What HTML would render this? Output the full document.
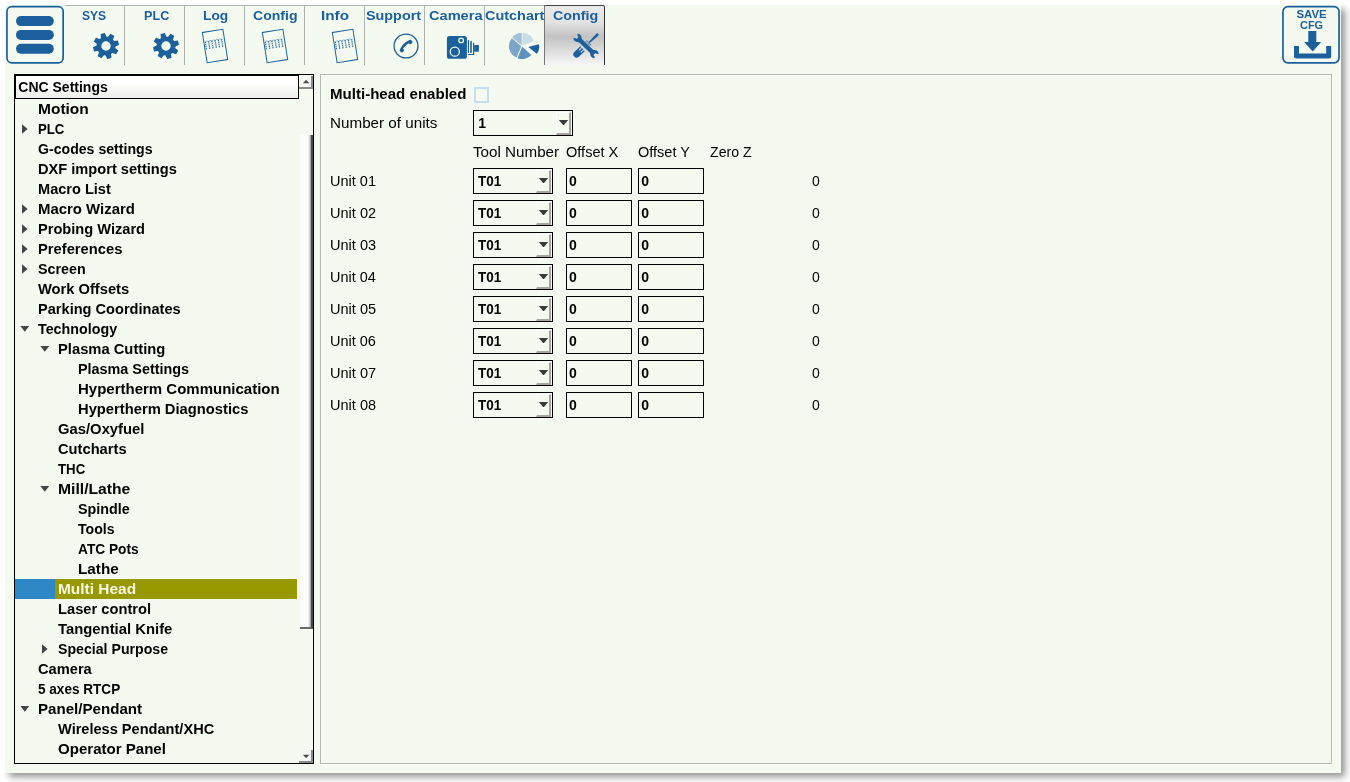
<!DOCTYPE html>
<html><head><meta charset="utf-8"><title>CNC Settings</title>
<style>
html,body{margin:0;padding:0;background:#fff;}
body{width:1350px;height:782px;position:relative;overflow:hidden;font-family:"Liberation Sans",sans-serif;color:#000000}
#win{position:absolute;left:5px;top:5px;width:1336px;height:768px;background:#f4faef;box-shadow:4px 4px 7px rgba(0,0,0,.42);}
.abs{position:absolute}
#txt{position:absolute;left:0;top:0;width:1350px;height:782px;will-change:transform}
.tx{position:absolute;white-space:nowrap;line-height:20px;transform-origin:0 0}
#menu{position:absolute;left:6px;top:5.700px;width:54.600px;height:54.600px;border:1.700px solid #1b609c;border-radius:5.500px}
#menu i{position:absolute;left:8.500px;width:38px;height:10px;border-radius:5px;background:#1b609c}
#tabline{position:absolute;left:65px;top:5px;width:480px;height:1px;background:#b0b0b0}
.tabsep{position:absolute;top:6px;width:1px;height:59px;background:#b0b2ae}
  .tabact{position:absolute;left:544px;top:5px;width:59px;height:59px;border-top-right-radius:2px;background:linear-gradient(#ebebeb 0%,#e2e2e2 28%,#c2c2c2 52%,#dcdcdc 75%,#f6f6f6 100%);border-left:1px solid #777;border-right:1px solid #333;border-top:1px solid #444}
#save{position:absolute;left:1282px;top:5.700px;width:54.400px;height:54.400px;border:1.800px solid #1b609c;border-radius:5.500px}
#tree{position:absolute;left:14px;top:74px;width:298px;height:688px;border:1px solid #000}
#hdr{position:absolute;left:15px;top:75px;width:282px;height:22px;border:1px solid #000;background:linear-gradient(#fff 0%,#fff 35%,#eceee9 100%)}
.selb{position:absolute;left:15px;top:579px;width:40px;height:20px;background:#2f88c6}
.selo{position:absolute;left:55px;top:579px;width:242px;height:20px;background:#989800}
.sbb{position:absolute;left:299px;width:12px;height:11px;border-right:2px solid #8a8a8a;border-bottom:2px solid #8a8a8a;background:#f6faf3}
#thumb{position:absolute;left:300px;top:135px;width:11px;height:492px;border-right:2px solid #484848;border-bottom:2px solid #6a6a6a;background:linear-gradient(90deg,#fbfdfa 0,#fbfdfa 8px,#c8c8c8 10px,#888 11px)}
#panel{position:absolute;left:320px;top:74px;width:1010px;height:688px;border:1px solid #b4bab2;box-shadow:inset 1px 1px 0 #f9fcf6, 1px 1px 0 #fbfdf9}
.combo{position:absolute;height:24px;border:1px solid #000}
.combo .cb{position:absolute;right:1px;top:1px;width:12px;height:20px;border-left:1px solid #fff;border-top:1px solid #fff;border-right:2px solid #a8a39e;border-bottom:2px solid #a8a39e}
.combo i{position:absolute;right:3.800px;top:9px;width:9.400px;height:5.400px;background:#3a3a3a;clip-path:polygon(0 0,100% 0,50% 100%)}
.inp{position:absolute;width:64px;height:24px;border:1px solid #000}
#cbx{position:absolute;left:474px;top:87px;width:11px;height:12px;border:2px solid #c6dcef}
</style></head><body>
<div id="win"></div>
<div class="abs" style="left:0;top:0;width:1342px;height:5px;background:#fff"></div><div class="abs" style="left:0;top:0;width:5px;height:774px;background:#fff"></div>
<svg class="abs" style="left:4px;top:4px" width="64" height="64" viewBox="4 4 64 64"><rect x="6.950" y="6.600" width="56.200" height="56.200" rx="4.800" fill="none" stroke="#1b609c" stroke-width="1.700"/><g fill="#1b609c"><rect x="16" y="16.100" width="37.800" height="10" rx="5"/><rect x="16" y="29.900" width="37.800" height="10" rx="5"/><rect x="16" y="43.700" width="37.800" height="10" rx="5"/></g></svg>
<div id="tabline"></div>
<div class="tabsep" style="left:124px"></div>
<svg class="abs" style="left:92.3px;top:32.45px" width="28" height="28" viewBox="-14 -14 28 28"><g fill="#1b609c"><path d="M-2.900 -8 L-2.250 -12.600 Q-2.200 -12.900 -1.900 -12.900 L1.900 -12.900 Q2.200 -12.900 2.250 -12.600 L2.900 -8Z" transform="rotate(-15)"/><path d="M-2.900 -8 L-2.250 -12.600 Q-2.200 -12.900 -1.900 -12.900 L1.900 -12.900 Q2.200 -12.900 2.250 -12.600 L2.900 -8Z" transform="rotate(30)"/><path d="M-2.900 -8 L-2.250 -12.600 Q-2.200 -12.900 -1.900 -12.900 L1.900 -12.900 Q2.200 -12.900 2.250 -12.600 L2.900 -8Z" transform="rotate(75)"/><path d="M-2.900 -8 L-2.250 -12.600 Q-2.200 -12.900 -1.900 -12.900 L1.900 -12.900 Q2.200 -12.900 2.250 -12.600 L2.900 -8Z" transform="rotate(120)"/><path d="M-2.900 -8 L-2.250 -12.600 Q-2.200 -12.900 -1.900 -12.900 L1.900 -12.900 Q2.200 -12.900 2.250 -12.600 L2.900 -8Z" transform="rotate(165)"/><path d="M-2.900 -8 L-2.250 -12.600 Q-2.200 -12.900 -1.900 -12.900 L1.900 -12.900 Q2.200 -12.900 2.250 -12.600 L2.900 -8Z" transform="rotate(210)"/><path d="M-2.900 -8 L-2.250 -12.600 Q-2.200 -12.900 -1.900 -12.900 L1.900 -12.900 Q2.200 -12.900 2.250 -12.600 L2.900 -8Z" transform="rotate(255)"/><path d="M-2.900 -8 L-2.250 -12.600 Q-2.200 -12.900 -1.900 -12.900 L1.900 -12.900 Q2.200 -12.900 2.250 -12.600 L2.900 -8Z" transform="rotate(300)"/><path fill-rule="evenodd" d="M0 -9.600A9.600 9.600 0 1 0 0 9.600A9.600 9.600 0 1 0 0 -9.600ZM0 -4.700A4.700 4.700 0 1 1 0 4.700A4.700 4.700 0 1 1 0 -4.700Z"/></g></svg>
<div class="tabsep" style="left:184px"></div>
<svg class="abs" style="left:152.3px;top:32.45px" width="28" height="28" viewBox="-14 -14 28 28"><g fill="#1b609c"><path d="M-2.900 -8 L-2.250 -12.600 Q-2.200 -12.900 -1.900 -12.900 L1.900 -12.900 Q2.200 -12.900 2.250 -12.600 L2.900 -8Z" transform="rotate(-15)"/><path d="M-2.900 -8 L-2.250 -12.600 Q-2.200 -12.900 -1.900 -12.900 L1.900 -12.900 Q2.200 -12.900 2.250 -12.600 L2.900 -8Z" transform="rotate(30)"/><path d="M-2.900 -8 L-2.250 -12.600 Q-2.200 -12.900 -1.900 -12.900 L1.900 -12.900 Q2.200 -12.900 2.250 -12.600 L2.900 -8Z" transform="rotate(75)"/><path d="M-2.900 -8 L-2.250 -12.600 Q-2.200 -12.900 -1.900 -12.900 L1.900 -12.900 Q2.200 -12.900 2.250 -12.600 L2.900 -8Z" transform="rotate(120)"/><path d="M-2.900 -8 L-2.250 -12.600 Q-2.200 -12.900 -1.900 -12.900 L1.900 -12.900 Q2.200 -12.900 2.250 -12.600 L2.900 -8Z" transform="rotate(165)"/><path d="M-2.900 -8 L-2.250 -12.600 Q-2.200 -12.900 -1.900 -12.900 L1.900 -12.900 Q2.200 -12.900 2.250 -12.600 L2.900 -8Z" transform="rotate(210)"/><path d="M-2.900 -8 L-2.250 -12.600 Q-2.200 -12.900 -1.900 -12.900 L1.900 -12.900 Q2.200 -12.900 2.250 -12.600 L2.900 -8Z" transform="rotate(255)"/><path d="M-2.900 -8 L-2.250 -12.600 Q-2.200 -12.900 -1.900 -12.900 L1.900 -12.900 Q2.200 -12.900 2.250 -12.600 L2.900 -8Z" transform="rotate(300)"/><path fill-rule="evenodd" d="M0 -9.600A9.600 9.600 0 1 0 0 9.600A9.600 9.600 0 1 0 0 -9.600ZM0 -4.700A4.700 4.700 0 1 1 0 4.700A4.700 4.700 0 1 1 0 -4.700Z"/></g></svg>
<div class="tabsep" style="left:244px"></div>
<svg class="abs" style="left:197px;top:25.9px" width="36" height="40" viewBox="-18 -20 36 40"><g transform="rotate(-9)" fill="none" stroke="#1b609c"><rect x="-10.400" y="-15.300" width="20.800" height="30.600" stroke-width="1"/><path d="M-8.9 -5.700v8M-5.6 -5.700v8M-2.3 -5.700v8M1.0 -5.700v8M4.3 -5.700v8M7.6 -5.700v8" stroke-width="1.300" stroke-dasharray="1.400 0.700" opacity="0.850"/><path d="M-8.9 -5.500q1.650 -1.500 3.300 0M-5.6 -5.500q1.650 -1.500 3.300 0M-2.3 -5.500q1.650 -1.500 3.300 0M1.0 -5.500q1.650 -1.500 3.300 0M4.3 -5.500q1.650 -1.500 3.300 0" stroke-width="0.700" opacity="0.600"/></g></svg>
<div class="tabsep" style="left:304px"></div>
<svg class="abs" style="left:257px;top:25.9px" width="36" height="40" viewBox="-18 -20 36 40"><g transform="rotate(-9)" fill="none" stroke="#1b609c"><rect x="-10.400" y="-15.300" width="20.800" height="30.600" stroke-width="1"/><path d="M-8.9 -5.700v8M-5.6 -5.700v8M-2.3 -5.700v8M1.0 -5.700v8M4.3 -5.700v8M7.6 -5.700v8" stroke-width="1.300" stroke-dasharray="1.400 0.700" opacity="0.850"/><path d="M-8.9 -5.500q1.650 -1.500 3.300 0M-5.6 -5.500q1.650 -1.500 3.300 0M-2.3 -5.500q1.650 -1.500 3.300 0M1.0 -5.500q1.650 -1.500 3.300 0M4.3 -5.500q1.650 -1.500 3.300 0" stroke-width="0.700" opacity="0.600"/></g></svg>
<div class="tabsep" style="left:364px"></div>
<svg class="abs" style="left:327.4px;top:25.9px" width="36" height="40" viewBox="-18 -20 36 40"><g transform="rotate(-9)" fill="none" stroke="#1b609c"><rect x="-10.400" y="-15.300" width="20.800" height="30.600" stroke-width="1"/><path d="M-8.9 -5.700v8M-5.6 -5.700v8M-2.3 -5.700v8M1.0 -5.700v8M4.3 -5.700v8M7.6 -5.700v8" stroke-width="1.300" stroke-dasharray="1.400 0.700" opacity="0.850"/><path d="M-8.9 -5.500q1.650 -1.500 3.300 0M-5.6 -5.500q1.650 -1.500 3.300 0M-2.3 -5.500q1.650 -1.500 3.300 0M1.0 -5.500q1.650 -1.500 3.300 0M4.3 -5.500q1.650 -1.500 3.300 0" stroke-width="0.700" opacity="0.600"/></g></svg>
<div class="tabsep" style="left:424px"></div>
<svg class="abs" style="left:392.3px;top:32.05px" width="28" height="28" viewBox="-14 -14 28 28"><circle r="11.950" fill="none" stroke="#1b609c" stroke-width="1.300"/><g fill="#1b609c"><rect x="-1.850" y="-1.850" width="3.700" height="3.700" rx="0.900" transform="translate(-4.100 4.300) rotate(45)"/><rect x="-1.850" y="-1.850" width="3.700" height="3.700" rx="0.900" transform="translate(4.300 -4) rotate(45)"/></g><path d="M-4.800 3.700Q-2.300 -2.100 3.700 -4.700" fill="none" stroke="#1b609c" stroke-width="2.500" stroke-linecap="round"/></svg>
<div class="tabsep" style="left:484px"></div>
<svg class="abs" style="left:445px;top:34px" width="38" height="28" viewBox="0 0 38 28"><rect x="1.900" y="2.100" width="20" height="22.700" rx="2.600" fill="#1b609c"/><circle cx="9.800" cy="17.650" r="4.550" fill="none" stroke="#f4faef" stroke-width="1.300"/><circle cx="16.100" cy="6.400" r="2.300" fill="none" stroke="#f4faef" stroke-width="1.300"/><rect x="22.800" y="6.100" width="1.200" height="12.800" fill="#1b609c"/><rect x="25" y="7.100" width="2" height="11.800" fill="#1b609c" opacity="0.800"/><path d="M28.600 8.800V20.500H22.800" fill="none" stroke="#1b609c" stroke-width="1.200"/><rect x="29.200" y="11" width="4.700" height="6.700" fill="#1b609c"/></svg>
<div class="tabsep" style="left:544px"></div>
<svg class="abs" style="left:506.04999999999995px;top:29.6px" width="36" height="32" viewBox="-16 -16 36 32"><path d="M-0.32 -0.68L-9.74 -8.59A12.3 12.3 0 0 1 -0.32 -12.98Z" fill="#a1c0d5"/><path d="M0.42 -0.62L0.42 -12.92A12.3 12.3 0 0 1 11.91 -5.03Z" fill="#c9dde6"/><path d="M0.17 0.73L9.38 8.88A12.3 12.3 0 0 1 -4.44 12.13Z" fill="#5c92bc"/><path d="M-0.73 0.18L-5.34 11.59A12.3 12.3 0 0 1 -10.15 -7.72Z" fill="#7ba6c5"/><path d="M6.30 0.90L16.88 -1.74A10.9 10.9 0 0 1 14.77 7.76Z" fill="#1b609c"/></svg>
<div class="tabact" style="left:544px"></div>
<svg class="abs" style="left:568.04px;top:28.35px" width="36" height="36" viewBox="-18 -18 36 36"><g transform="translate(-9.39 8.35) rotate(-43.500)" fill="#1b609c"><path d="M0 -3.300H8.300L7.900 -1.900H4.400V-0.800H8.300V0.800H4.400V1.900H7.900L8.300 3.300H0A3.300 3.300 0 0 1 0 -3.300Z"/><path d="M15.700 -3.300V3.300M17 -3.300V3.300" stroke="#1b609c" stroke-width="0.800" opacity="0.850" fill="none"/><path d="M17.300 -0.700L28.500 -1.400A1.400 1.400 0 0 1 28.500 1.400L17.300 0.700Z"/></g><g transform="rotate(43.600)" fill="#1b609c"><path d="M0.200 -2.150L-7 -2.150C-8.600 -2.150 -9.600 -4.200 -11.600 -4.200C-13 -4.200 -14 -3.700 -14.500 -2.800L-13.300 -1.600L-11.700 -1.600Q-11.200 0 -11.700 1.600L-13.300 1.600L-14.500 2.800C-14 3.700 -13 4.200 -11.600 4.200C-9.600 4.200 -8.600 2.150 -7 2.150L0.200 2.150Z"/><path d="M0.200 -2.150L-7 -2.150C-8.600 -2.150 -9.600 -4.200 -11.600 -4.200C-13 -4.200 -14 -3.700 -14.500 -2.800L-13.300 -1.600L-11.700 -1.600Q-11.200 0 -11.700 1.600L-13.300 1.600L-14.500 2.800C-14 3.700 -13 4.200 -11.600 4.200C-9.600 4.200 -8.600 2.150 -7 2.150L0.200 2.150Z" transform="rotate(180)"/></g></svg>
<svg class="abs" style="left:1280px;top:4px" width="62" height="62" viewBox="1280 4 62 62"><rect x="1282.950" y="6.700" width="56.100" height="56.100" rx="5" fill="none" stroke="#1b609c" stroke-width="1.700"/></svg>
<svg class="abs" style="left:1290px;top:28px" width="46" height="34" viewBox="0 0 46 34"><path d="M18.300 3.100h8v11h4.900L22.700 23.400 14.200 14.100h4.100z" fill="#1b609c"/><path d="M6.500 18v9.900h32.200V18" fill="none" stroke="#1b609c" stroke-width="5" stroke-linejoin="round"/></svg>
<div id="tree"></div>
<div id="hdr"></div>
<div class="selb"></div><div class="selo"></div>
<div class="sbb" style="top:76px"></div>
<svg class="abs" style="left:301px;top:78px" width="10" height="6" viewBox="0 0 10 6"><path d="M1.900 5.200L5.100 1.800 8.300 5.200z" fill="#4a4a4a"/></svg>
<div id="thumb"></div>
<div class="sbb" style="top:750px;height:11px"></div>
<svg class="abs" style="left:301px;top:754px" width="10" height="6" viewBox="0 0 10 6"><path d="M1.900 0.800L8.300 0.800 5.100 4.200z" fill="#4a4a4a"/></svg>
<div id="panel"></div>
<div id="cbx"></div>
<div class="combo" style="left:473px;top:110px;width:98px"><span class="cb"></span><i></i></div>
<div class="combo" style="left:473px;top:168px;width:78px"><span class="cb"></span><i></i></div>
<div class="inp" style="left:566px;top:168px"></div><div class="inp" style="left:638px;top:168px"></div>
<div class="combo" style="left:473px;top:200px;width:78px"><span class="cb"></span><i></i></div>
<div class="inp" style="left:566px;top:200px"></div><div class="inp" style="left:638px;top:200px"></div>
<div class="combo" style="left:473px;top:232px;width:78px"><span class="cb"></span><i></i></div>
<div class="inp" style="left:566px;top:232px"></div><div class="inp" style="left:638px;top:232px"></div>
<div class="combo" style="left:473px;top:264px;width:78px"><span class="cb"></span><i></i></div>
<div class="inp" style="left:566px;top:264px"></div><div class="inp" style="left:638px;top:264px"></div>
<div class="combo" style="left:473px;top:296px;width:78px"><span class="cb"></span><i></i></div>
<div class="inp" style="left:566px;top:296px"></div><div class="inp" style="left:638px;top:296px"></div>
<div class="combo" style="left:473px;top:328px;width:78px"><span class="cb"></span><i></i></div>
<div class="inp" style="left:566px;top:328px"></div><div class="inp" style="left:638px;top:328px"></div>
<div class="combo" style="left:473px;top:360px;width:78px"><span class="cb"></span><i></i></div>
<div class="inp" style="left:566px;top:360px"></div><div class="inp" style="left:638px;top:360px"></div>
<div class="combo" style="left:473px;top:392px;width:78px"><span class="cb"></span><i></i></div>
<div class="inp" style="left:566px;top:392px"></div><div class="inp" style="left:638px;top:392px"></div>
<svg class="abs" style="left:21px;top:123px" width="8" height="12" viewBox="0 0 8 12"><path d="M1 1.2 L6.600 6 L1 10.800 Z" fill="#454545"/></svg>
<svg class="abs" style="left:21px;top:203px" width="8" height="12" viewBox="0 0 8 12"><path d="M1 1.2 L6.600 6 L1 10.800 Z" fill="#454545"/></svg>
<svg class="abs" style="left:21px;top:223px" width="8" height="12" viewBox="0 0 8 12"><path d="M1 1.2 L6.600 6 L1 10.800 Z" fill="#454545"/></svg>
<svg class="abs" style="left:21px;top:243px" width="8" height="12" viewBox="0 0 8 12"><path d="M1 1.2 L6.600 6 L1 10.800 Z" fill="#454545"/></svg>
<svg class="abs" style="left:21px;top:263px" width="8" height="12" viewBox="0 0 8 12"><path d="M1 1.2 L6.600 6 L1 10.800 Z" fill="#454545"/></svg>
<svg class="abs" style="left:19px;top:325px" width="12" height="8" viewBox="0 0 12 8"><path d="M1.400 1 L10.200 1 L5.800 6.700 Z" fill="#454545"/></svg>
<svg class="abs" style="left:39px;top:345px" width="12" height="8" viewBox="0 0 12 8"><path d="M1.400 1 L10.200 1 L5.800 6.700 Z" fill="#454545"/></svg>
<svg class="abs" style="left:39px;top:485px" width="12" height="8" viewBox="0 0 12 8"><path d="M1.400 1 L10.200 1 L5.800 6.700 Z" fill="#454545"/></svg>
<svg class="abs" style="left:41px;top:643px" width="8" height="12" viewBox="0 0 8 12"><path d="M1 1.2 L6.600 6 L1 10.800 Z" fill="#454545"/></svg>
<svg class="abs" style="left:19px;top:705px" width="12" height="8" viewBox="0 0 12 8"><path d="M1.400 1 L10.200 1 L5.800 6.700 Z" fill="#454545"/></svg>
<div id="txt">
<span class="tx" style="left:82.06px;top:5.9px;font-size:13.2px;transform:scaleX(0.916);font-weight:bold;color:#1b609c;">SYS</span>
<span class="tx" style="left:143.94px;top:5.9px;font-size:13.2px;transform:scaleX(0.958);font-weight:bold;color:#1b609c;">PLC</span>
<span class="tx" style="left:202.55px;top:5.9px;font-size:13.2px;transform:scaleX(1.045);font-weight:bold;color:#1b609c;">Log</span>
<span class="tx" style="left:253.37px;top:5.9px;font-size:13.2px;transform:scaleX(1.065);font-weight:bold;color:#1b609c;">Config</span>
<span class="tx" style="left:321.24px;top:5.9px;font-size:13.2px;transform:scaleX(1.159);font-weight:bold;color:#1b609c;">Info</span>
<span class="tx" style="left:366.11px;top:5.9px;font-size:13.2px;transform:scaleX(1.089);font-weight:bold;color:#1b609c;">Support</span>
<span class="tx" style="left:428.55px;top:5.9px;font-size:13.2px;transform:scaleX(1.106);font-weight:bold;color:#1b609c;">Camera</span>
<span class="tx" style="left:484.85px;top:5.9px;font-size:13.2px;transform:scaleX(1.095);font-weight:bold;color:#1b609c;">Cutchart</span>
<span class="tx" style="left:552.56px;top:5.9px;font-size:13.2px;transform:scaleX(1.084);font-weight:bold;color:#1b609c;">Config</span>
<span class="tx" style="left:1296.50px;top:4.3px;font-size:11.4px;font-weight:bold;color:#1b609c;">SAVE</span>
<span class="tx" style="left:1300.32px;top:15.1px;font-size:11.4px;transform:scaleX(0.958);font-weight:bold;color:#1b609c;">CFG</span>
<span class="tx" style="left:18.30px;top:77.2px;font-size:14.0px;font-weight:bold;">CNC Settings</span>
<span class="tx" style="left:38.19px;top:99.3px;font-size:14.0px;transform:scaleX(1.107);font-weight:bold;">Motion</span>
<span class="tx" style="left:37.86px;top:119.3px;font-size:14.0px;transform:scaleX(0.943);font-weight:bold;">PLC</span>
<span class="tx" style="left:38.30px;top:139.3px;font-size:14.0px;transform:scaleX(1.008);font-weight:bold;">G-codes settings</span>
<span class="tx" style="left:37.76px;top:159.3px;font-size:14.0px;transform:scaleX(1.044);font-weight:bold;">DXF import settings</span>
<span class="tx" style="left:38.26px;top:179.3px;font-size:14.0px;transform:scaleX(1.040);font-weight:bold;">Macro List</span>
<span class="tx" style="left:38.23px;top:199.3px;font-size:14.0px;transform:scaleX(1.066);font-weight:bold;">Macro Wizard</span>
<span class="tx" style="left:37.76px;top:219.3px;font-size:14.0px;transform:scaleX(1.044);font-weight:bold;">Probing Wizard</span>
<span class="tx" style="left:37.75px;top:239.3px;font-size:14.0px;transform:scaleX(1.052);font-weight:bold;">Preferences</span>
<span class="tx" style="left:38.29px;top:259.3px;font-size:14.0px;transform:scaleX(1.020);font-weight:bold;">Screen</span>
<span class="tx" style="left:38.20px;top:279.3px;font-size:14.0px;transform:scaleX(1.049);font-weight:bold;">Work Offsets</span>
<span class="tx" style="left:37.76px;top:299.3px;font-size:14.0px;transform:scaleX(1.042);font-weight:bold;">Parking Coordinates</span>
<span class="tx" style="left:37.95px;top:319.3px;font-size:14.0px;transform:scaleX(1.020);font-weight:bold;">Technology</span>
<span class="tx" style="left:57.75px;top:339.3px;font-size:14.0px;transform:scaleX(1.053);font-weight:bold;">Plasma Cutting</span>
<span class="tx" style="left:77.77px;top:359.3px;font-size:14.0px;transform:scaleX(1.027);font-weight:bold;">Plasma Settings</span>
<span class="tx" style="left:77.73px;top:379.3px;font-size:14.0px;transform:scaleX(1.071);font-weight:bold;">Hypertherm Communication</span>
<span class="tx" style="left:77.75px;top:399.3px;font-size:14.0px;transform:scaleX(1.053);font-weight:bold;">Hypertherm Diagnostics</span>
<span class="tx" style="left:58.27px;top:419.3px;font-size:14.0px;transform:scaleX(1.058);font-weight:bold;">Gas/Oxyfuel</span>
<span class="tx" style="left:58.28px;top:439.3px;font-size:14.0px;transform:scaleX(1.049);font-weight:bold;">Cutcharts</span>
<span class="tx" style="left:57.96px;top:459.3px;font-size:14.0px;transform:scaleX(0.945);font-weight:bold;">THC</span>
<span class="tx" style="left:58.18px;top:479.3px;font-size:14.0px;transform:scaleX(1.120);font-weight:bold;">Mill/Lathe</span>
<span class="tx" style="left:78.29px;top:499.3px;font-size:14.0px;transform:scaleX(1.022);font-weight:bold;">Spindle</span>
<span class="tx" style="left:77.95px;top:519.3px;font-size:14.0px;transform:scaleX(1.008);font-weight:bold;">Tools</span>
<span class="tx" style="left:78.31px;top:539.3px;font-size:14.0px;transform:scaleX(0.979);font-weight:bold;">ATC Pots</span>
<span class="tx" style="left:77.71px;top:559.3px;font-size:14.0px;transform:scaleX(1.093);font-weight:bold;">Lathe</span>
<span class="tx" style="left:58.20px;top:579.3px;font-size:14.0px;transform:scaleX(1.103);font-weight:bold;color:#f7f7e2;">Multi Head</span>
<span class="tx" style="left:57.75px;top:599.3px;font-size:14.0px;transform:scaleX(1.049);font-weight:bold;">Laser control</span>
<span class="tx" style="left:57.93px;top:619.3px;font-size:14.0px;transform:scaleX(1.060);font-weight:bold;">Tangential Knife</span>
<span class="tx" style="left:58.30px;top:639.3px;font-size:14.0px;transform:scaleX(1.010);font-weight:bold;">Special Purpose</span>
<span class="tx" style="left:38.28px;top:659.3px;font-size:14.0px;transform:scaleX(1.046);font-weight:bold;">Camera</span>
<span class="tx" style="left:38.32px;top:679.3px;font-size:14.0px;transform:scaleX(0.969);font-weight:bold;">5 axes RTCP</span>
<span class="tx" style="left:37.72px;top:699.3px;font-size:14.0px;transform:scaleX(1.079);font-weight:bold;">Panel/Pendant</span>
<span class="tx" style="left:58.20px;top:719.3px;font-size:14.0px;transform:scaleX(1.041);font-weight:bold;">Wireless Pendant/XHC</span>
<span class="tx" style="left:58.26px;top:739.3px;font-size:14.0px;transform:scaleX(1.075);font-weight:bold;">Operator Panel</span>
<span class="tx" style="left:330.12px;top:84.1px;font-size:14.0px;transform:scaleX(1.076);font-weight:bold;">Multi-head enabled</span>
<span class="tx" style="left:329.64px;top:113.3px;font-size:14.0px;transform:scaleX(1.087);">Number of units</span>
<span class="tx" style="left:473.03px;top:142.3px;font-size:14.0px;transform:scaleX(1.085);">Tool Number</span>
<span class="tx" style="left:565.72px;top:142.3px;font-size:14.0px;transform:scaleX(1.039);">Offset X</span>
<span class="tx" style="left:637.92px;top:142.3px;font-size:14.0px;transform:scaleX(1.037);">Offset Y</span>
<span class="tx" style="left:709.99px;top:142.3px;font-size:14.0px;transform:scaleX(1.011);">Zero Z</span>
<span class="tx" style="left:478.30px;top:113.0px;font-size:14.0px;font-weight:bold;">1</span>
<span class="tx" style="left:329.96px;top:170.9px;font-size:14.0px;transform:scaleX(1.037);">Unit 01</span>
<span class="tx" style="left:478.06px;top:170.9px;font-size:14.0px;transform:scaleX(0.958);font-weight:bold;">T01</span>
<span class="tx" style="left:569.00px;top:170.9px;font-size:14.0px;font-weight:bold;">0</span>
<span class="tx" style="left:641.20px;top:170.9px;font-size:14.0px;font-weight:bold;">0</span>
<span class="tx" style="left:812.10px;top:170.9px;font-size:14.0px;">0</span>
<span class="tx" style="left:329.96px;top:202.9px;font-size:14.0px;transform:scaleX(1.039);">Unit 02</span>
<span class="tx" style="left:478.06px;top:202.9px;font-size:14.0px;transform:scaleX(0.958);font-weight:bold;">T01</span>
<span class="tx" style="left:569.00px;top:202.9px;font-size:14.0px;font-weight:bold;">0</span>
<span class="tx" style="left:641.20px;top:202.9px;font-size:14.0px;font-weight:bold;">0</span>
<span class="tx" style="left:812.10px;top:202.9px;font-size:14.0px;">0</span>
<span class="tx" style="left:329.96px;top:234.9px;font-size:14.0px;transform:scaleX(1.039);">Unit 03</span>
<span class="tx" style="left:478.06px;top:234.9px;font-size:14.0px;transform:scaleX(0.958);font-weight:bold;">T01</span>
<span class="tx" style="left:569.00px;top:234.9px;font-size:14.0px;font-weight:bold;">0</span>
<span class="tx" style="left:641.20px;top:234.9px;font-size:14.0px;font-weight:bold;">0</span>
<span class="tx" style="left:812.10px;top:234.9px;font-size:14.0px;">0</span>
<span class="tx" style="left:329.97px;top:266.9px;font-size:14.0px;transform:scaleX(1.031);">Unit 04</span>
<span class="tx" style="left:478.06px;top:266.9px;font-size:14.0px;transform:scaleX(0.958);font-weight:bold;">T01</span>
<span class="tx" style="left:569.00px;top:266.9px;font-size:14.0px;font-weight:bold;">0</span>
<span class="tx" style="left:641.20px;top:266.9px;font-size:14.0px;font-weight:bold;">0</span>
<span class="tx" style="left:812.10px;top:266.9px;font-size:14.0px;">0</span>
<span class="tx" style="left:329.96px;top:298.9px;font-size:14.0px;transform:scaleX(1.040);">Unit 05</span>
<span class="tx" style="left:478.06px;top:298.9px;font-size:14.0px;transform:scaleX(0.958);font-weight:bold;">T01</span>
<span class="tx" style="left:569.00px;top:298.9px;font-size:14.0px;font-weight:bold;">0</span>
<span class="tx" style="left:641.20px;top:298.9px;font-size:14.0px;font-weight:bold;">0</span>
<span class="tx" style="left:812.10px;top:298.9px;font-size:14.0px;">0</span>
<span class="tx" style="left:329.97px;top:330.9px;font-size:14.0px;transform:scaleX(1.035);">Unit 06</span>
<span class="tx" style="left:478.06px;top:330.9px;font-size:14.0px;transform:scaleX(0.958);font-weight:bold;">T01</span>
<span class="tx" style="left:569.00px;top:330.9px;font-size:14.0px;font-weight:bold;">0</span>
<span class="tx" style="left:641.20px;top:330.9px;font-size:14.0px;font-weight:bold;">0</span>
<span class="tx" style="left:812.10px;top:330.9px;font-size:14.0px;">0</span>
<span class="tx" style="left:329.96px;top:362.9px;font-size:14.0px;transform:scaleX(1.039);">Unit 07</span>
<span class="tx" style="left:478.06px;top:362.9px;font-size:14.0px;transform:scaleX(0.958);font-weight:bold;">T01</span>
<span class="tx" style="left:569.00px;top:362.9px;font-size:14.0px;font-weight:bold;">0</span>
<span class="tx" style="left:641.20px;top:362.9px;font-size:14.0px;font-weight:bold;">0</span>
<span class="tx" style="left:812.10px;top:362.9px;font-size:14.0px;">0</span>
<span class="tx" style="left:329.96px;top:394.9px;font-size:14.0px;transform:scaleX(1.038);">Unit 08</span>
<span class="tx" style="left:478.06px;top:394.9px;font-size:14.0px;transform:scaleX(0.958);font-weight:bold;">T01</span>
<span class="tx" style="left:569.00px;top:394.9px;font-size:14.0px;font-weight:bold;">0</span>
<span class="tx" style="left:641.20px;top:394.9px;font-size:14.0px;font-weight:bold;">0</span>
<span class="tx" style="left:812.10px;top:394.9px;font-size:14.0px;">0</span>
</div>
</body></html>
